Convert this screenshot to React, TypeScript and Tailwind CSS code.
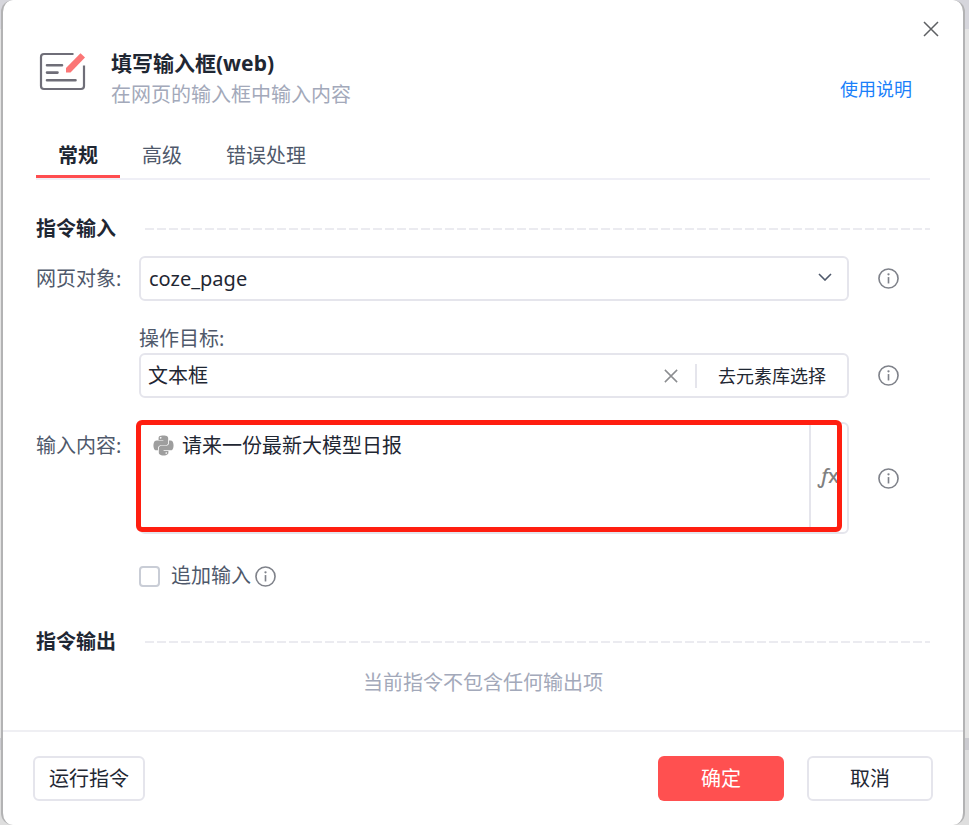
import { useState } from "react";
import { FaPython } from "react-icons/fa";

const TABS = ["常规", "高级", "错误处理"];

const InfoIcon = () => (
  <svg viewBox="0 0 22 22" className="h-[21px] w-[21px] text-[#7f828a]" fill="none" stroke="currentColor">
    <circle cx="11" cy="11" r="10" strokeWidth="1.7" />
    <path d="M11 9.5V16.2" strokeWidth="1.7" />
    <circle cx="11" cy="6.6" r="1.2" fill="currentColor" stroke="none" />
  </svg>
);

const InfoButton = ({ label }: { label: string }) => (
  <button type="button" aria-label={label} className="ml-[29px] mr-[31px] flex-none">
    <InfoIcon />
  </button>
);

const CrossIcon = ({ className }: { className: string }) => (
  <svg viewBox="0 0 16 16" className={className} fill="none" stroke="currentColor">
    <path d="M1 1l14 14M15 1L1 15" />
  </svg>
);

const FormIcon = () => (
  <svg viewBox="0 0 48 40" className="h-10 w-12 flex-none" fill="none">
    <path
      d="M35.500 3H6a3 3 0 0 0-3 3v29a3 3 0 0 0 3 3h37a3 3 0 0 0 3-3V14.500"
      stroke="#6f6e78"
      strokeWidth="2.200"
    />
    <path d="M9 14.300H24M9 21.600H19.500M9 29.300H37.500" stroke="#6f6e78" strokeWidth="2.600" strokeLinecap="round" />
    <path d="M28 17L42.500 2.200L47 6.500L32.500 21.500H28z" fill="#fb7676" />
  </svg>
);

const SectionTitle = ({ title }: { title: string }) => (
  <div className="flex items-center">
    <h2 className="w-[109px] flex-none font-bold text-[#1f2733]">{title}</h2>
    <div className="h-0.5 flex-1 bg-[repeating-linear-gradient(90deg,#ebebf0_0_9px,transparent_9px_12px)]" />
  </div>
);

const App = () => {
  const [tab, setTab] = useState("常规");
  const [target, setTarget] = useState("文本框");
  const [content, setContent] = useState("请来一份最新大模型日报");
  const [append, setAppend] = useState(false);

  return (
    <div className="min-h-screen bg-[linear-gradient(#d6d6dc_0_29px,#e4e4e4_29px_738px,#cbcbd0_738px_750px,#dedede_750px)] pl-px pr-1 text-[20px] leading-7 text-[#1f2733] [font-family:'Noto_Sans','Noto_Sans_CJK_SC',sans-serif]">
      <div role="dialog" aria-labelledby="title" className="rounded-xl border-x-2 border-[#b3b3b4] bg-white">
        <div className="flex justify-end pr-5 pt-[17px]">
          <button type="button" aria-label="关闭" className="flex h-6 w-6 items-center justify-center text-[#5e6063]">
            <CrossIcon className="h-4 w-4 stroke-[1.5]" />
          </button>
        </div>

        {/* Header */}
        <header className="mx-[33px] mt-2 flex items-start">
          <div className="w-[75px] flex-none pl-0.5 pt-0.5">
            <FormIcon />
          </div>
          <div className="flex-1">
            <h1 id="title" className="text-[21px] font-bold">填写输入框(web)</h1>
            <p className="mt-1 text-[#a3a9ba]">在网页的输入框中输入内容</p>
          </div>
          <a href="#help" className="mb-1.5 mr-[18px] self-end text-[18px] text-[#1a7ffa]">
            使用说明
          </a>
        </header>

        <div role="tablist" className="mx-[33px] mt-[33px] flex border-b-2 border-[#efeff6]">
          {TABS.map((name) => (
            <button
              key={name}
              type="button"
              role="tab"
              aria-selected={tab === name}
              onClick={() => setTab(name)}
              className={
                tab === name
                  ? "border-b-3 border-[#ff4d4f] px-[22px] pb-[5px] font-bold"
                  : "border-b-3 border-transparent px-[22px] pb-[5px] text-[#4f596b]"
              }
            >
              {name}
            </button>
          ))}
        </div>

        <form className="mx-[33px] mt-[35px]">
          <SectionTitle title="指令输入" />

          <div className="mt-[13px] flex items-center">
            <label htmlFor="page" className="w-[103px] flex-none text-[#4f596b]">网页对象:</label>
            <div className="grid flex-1">
              <select
                id="page"
                className="col-start-1 row-start-1 h-[45px] w-full appearance-none rounded-md border-2 border-[#e5e5ec] bg-white px-2"
              >
                <option>coze_page</option>
              </select>
              <svg
                viewBox="0 0 14 8"
                className="pointer-events-none col-start-1 row-start-1 mb-1 mr-[17px] h-2 w-3.5 self-center justify-self-end"
                fill="none"
                stroke="#4f596b"
                strokeWidth="1.6"
              >
                <path d="M1 1l6 6 6-6" />
              </svg>
            </div>
            <InfoButton label="网页对象说明" />
          </div>

          <div className="mt-6 pl-[103px]">
            <label htmlFor="target" className="block text-[#4f596b]">操作目标:</label>
            <div className="flex items-center">
              <div className="flex h-[45px] min-w-0 flex-1 items-center rounded-md border-2 border-[#e5e5ec]">
                <input
                  id="target"
                  value={target}
                  onChange={(e) => setTarget(e.target.value)}
                  className="min-w-0 flex-1 pl-[7px] outline-none"
                />
                <button
                  type="button"
                  aria-label="清除"
                  onClick={() => setTarget("")}
                  className="mr-[17px] text-[#8b8d90]"
                >
                  <CrossIcon className="h-3.5 w-3.5 stroke-[1.7]" />
                </button>
                <div className="h-6 w-0.5 bg-[#e5e5ec]" />
                <button type="button" className="px-[21px] text-[18px]">去元素库选择</button>
              </div>
              <InfoButton label="操作目标说明" />
            </div>
          </div>

          <div className="mt-6 flex items-center">
            <label htmlFor="content" className="w-[103px] flex-none self-start pt-2.5 text-[#4f596b]">
              输入内容:
            </label>
            <div className="relative flex h-28 min-w-0 flex-1 rounded-md border-2 border-[#e5e5ec]">
              <FaPython className="ml-[11px] mt-2.5 h-[23px] w-[23px] flex-none text-[#9e9e9e]" />
              <textarea
                id="content"
                value={content}
                onChange={(e) => setContent(e.target.value)}
                className="min-w-0 flex-1 resize-none pl-[7px] pt-2 outline-none"
              />
              <button
                type="button"
                aria-label="函数"
                className="w-[38px] flex-none border-l-2 border-[#e5e5ec] pb-1 font-medium text-[#808080]"
              >
                <span className="italic">ƒ</span>x
              </button>
              {/* Highlight frame */}
              <div className="pointer-events-none absolute -left-[5px] -top-1 bottom-0 right-[5px] rounded-md border-5 border-[#ff1e10]" />
            </div>
            <InfoButton label="输入内容说明" />
          </div>

          <div className="mt-7 flex items-center pl-[103px]">
            <input
              id="append"
              type="checkbox"
              checked={append}
              onChange={(e) => setAppend(e.target.checked)}
              className="h-[21px] w-[21px] appearance-none rounded-sm border-2 border-[#c9cdd6] checked:border-[#ff4d4f] checked:bg-[#ff4d4f]"
            />
            <label htmlFor="append" className="ml-[11px] text-[#4f596b]">追加输入</label>
            <button type="button" aria-label="追加输入说明" className="ml-1">
              <InfoIcon />
            </button>
          </div>

          <div className="mt-[38px]">
            <SectionTitle title="指令输出" />
          </div>
          <p className="mt-[13px] text-center text-[#a3a9ba]">当前指令不包含任何输出项</p>
        </form>

        {/* Footer */}
        <footer className="mt-[33px] flex gap-[23px] border-t-2 border-[#efeff3] px-[30px] py-6">
          <button type="button" className="mr-auto h-[45px] rounded-md border-2 border-[#e5e5ec] px-3.5">
            运行指令
          </button>
          <button type="button" className="h-[45px] w-[126px] rounded-md bg-[#ff5050] text-white">确定</button>
          <button type="button" className="h-[45px] w-[126px] rounded-md border-2 border-[#e5e5ec]">取消</button>
        </footer>
      </div>
    </div>
  );
};

export default App;
